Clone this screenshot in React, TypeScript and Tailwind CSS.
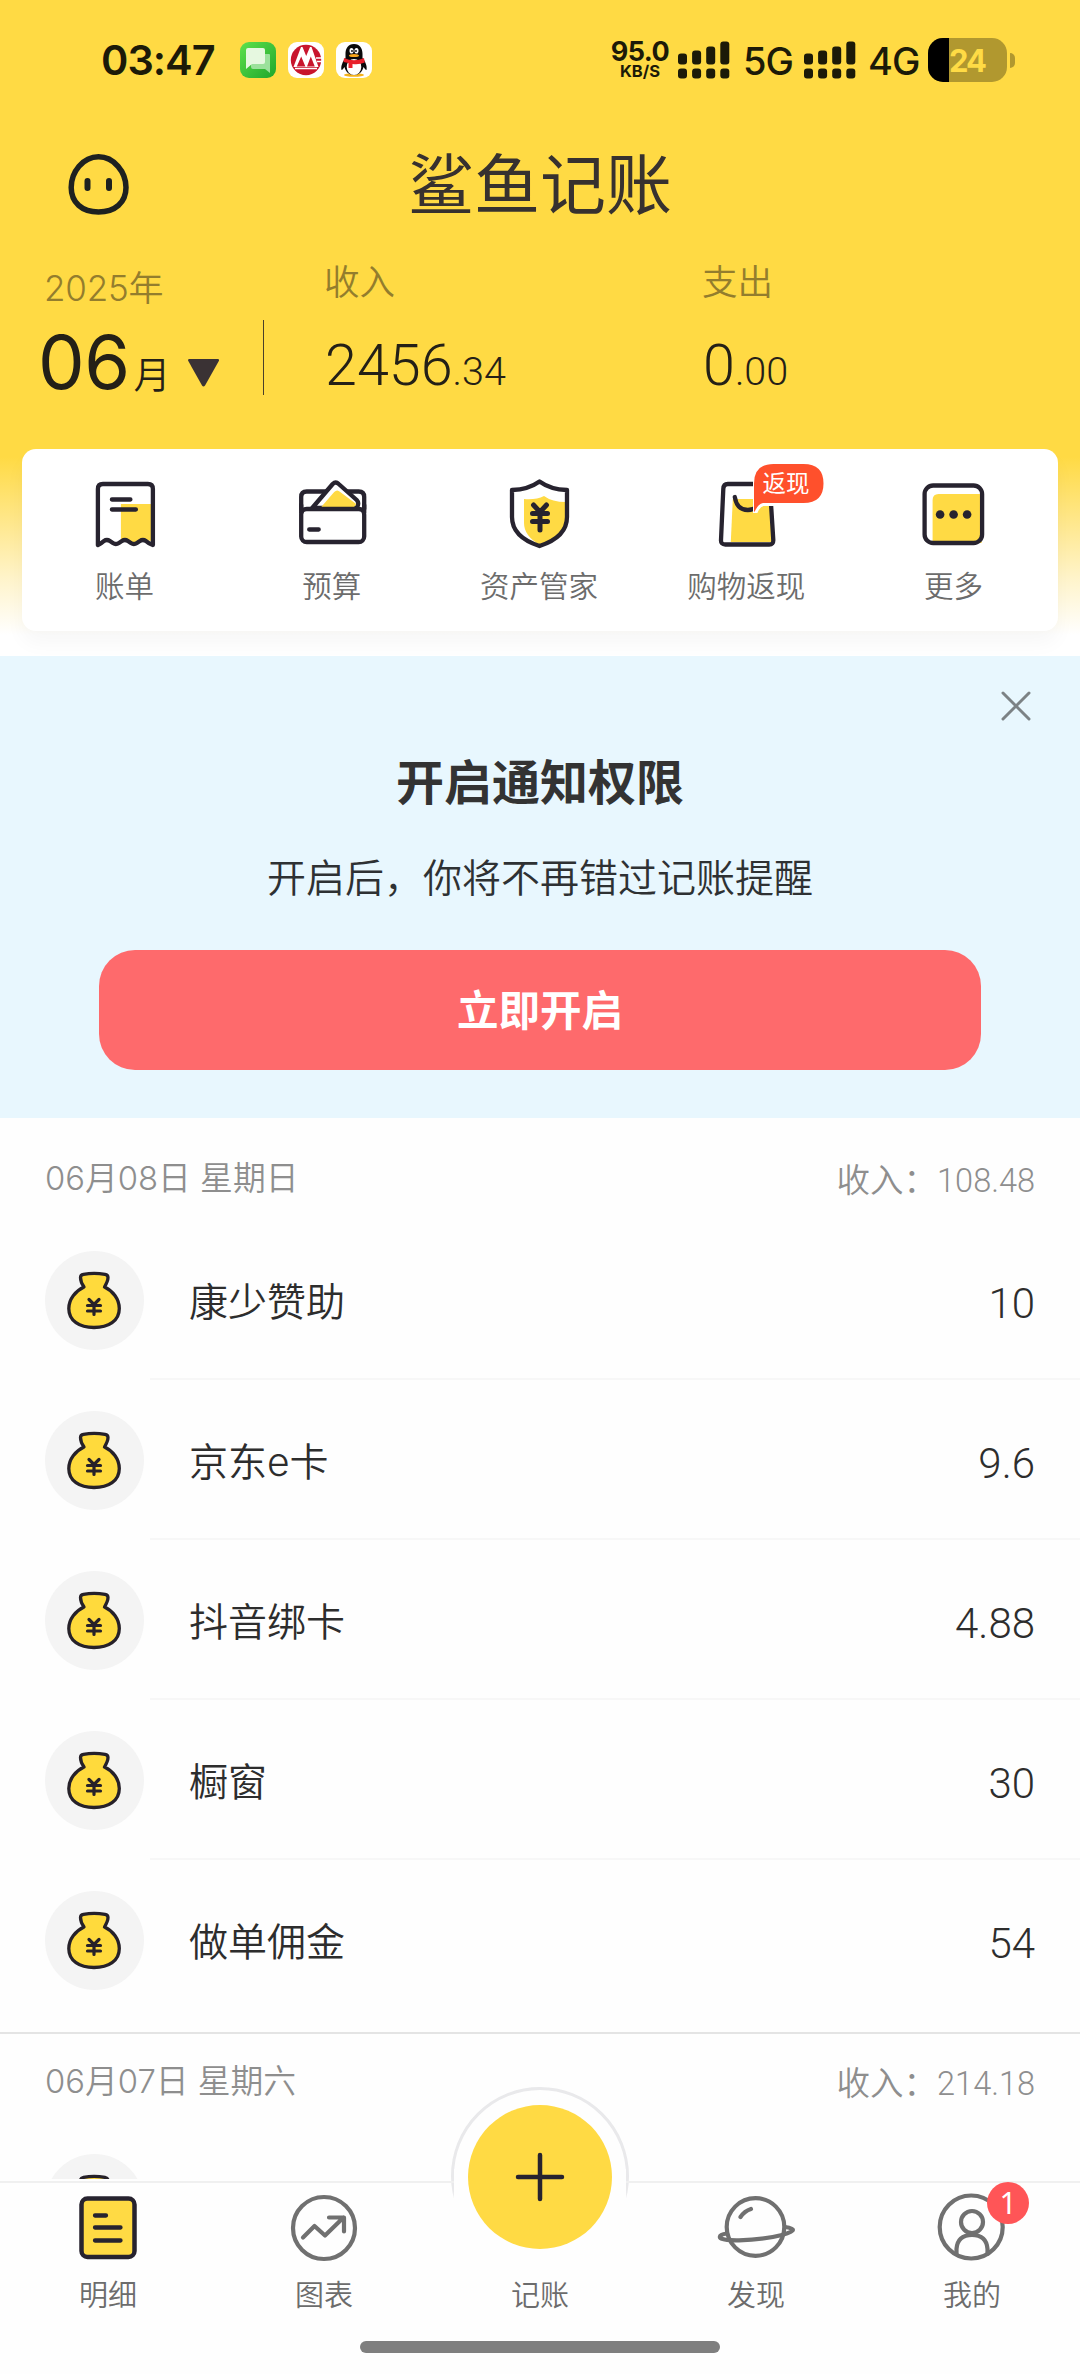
import type { ReactNode } from "react";

const CJK = "font-['Inter','Noto_Sans_CJK_SC',sans-serif]";
const NUM = "font-['Roboto','Noto_Sans_CJK_SC',sans-serif]";

function SignalBars() {
  const tops = [53, 50, 46, 41];
  return (
    <svg className="h-[38px] w-[52px]" viewBox="0 40.5 52 38" fill="#1c1a08">
      {tops.map((top, i) => (
        <g key={top}>
          <rect x={i * 14.1} y={top} width="9" height={64 - top} rx="3" />
          <rect x={i * 14.1} y="68" width="9" height="10" rx="3" />
        </g>
      ))}
    </svg>
  );
}

function StatusBar() {
  return (
    <div className="flex h-[120px] items-center pl-[101px] pr-[65px] text-[#1c1a08]">
      <span className="w-[139px] text-[41.5px] font-semibold leading-[41px] tracking-[-1px]">03:47</span>
      <div className="flex gap-3">
        <svg className="size-9" viewBox="0 0 36 36">
          <defs>
            <linearGradient id="msg" x1="0" y1="0" x2="1" y2="1">
              <stop offset="0" stopColor="#5ee14c" />
              <stop offset="1" stopColor="#1fa62b" />
            </linearGradient>
          </defs>
          <rect width="36" height="36" rx="9" fill="url(#msg)" />
          <path d="M13 12h16q1 0 1 1v18l-5-4H13q-2 0-2-2V13z" fill="#9be19b" />
          <path d="M8 6h15q2 0 2 2v12q0 2-2 2H12l-6 5V8q0-2 2-2z" fill="#e6f8e0" />
        </svg>
        <svg className="size-9" viewBox="0 0 36 36">
          <rect width="36" height="36" rx="9" fill="#fff" />
          <circle cx="18" cy="18" r="15.2" fill="#c8152d" />
          <path d="M5.500 25 13 5h1.500L18.200 14 22 5h1.500L30.500 25z" fill="#fff" />
          <path d="M8.800 24.500 13.200 14.500 17.400 24.500zM19 24.500 22.800 14.500 26.800 24.500z" fill="#c8152d" />
          <path d="M7 26.500h22M28 16h6M29 19.500h5" stroke="#fff" strokeWidth="1.600" />
        </svg>
        <svg className="size-9" viewBox="0 0 36 36">
          <rect width="36" height="36" rx="9" fill="#fff" />
          <ellipse cx="18" cy="33" rx="10" ry="1.800" fill="#f4b21b" />
          <path d="M18 2c-6 0-8.500 4.500-8.500 10v4C7 19 4.500 24 5.500 28c1 0 2-1.500 3-3 1 5 5 8 9.500 8s8.500-3 9.500-8c1 1.500 2 3 3 3 1-4-1.500-9-4-12v-4c0-5.500-2.500-10-8.500-10z" fill="#0a0a0a" />
          <ellipse cx="18" cy="25" rx="7.300" ry="8" fill="#fff" />
          <path d="M8 16q10 4.500 20 0l.8 4.500Q23 23 16.500 22v4h-4v-5L7.500 20z" fill="#e8202a" />
          <ellipse cx="15.500" cy="8.800" rx="2" ry="2.800" fill="#fff" />
          <ellipse cx="20.500" cy="8.800" rx="2" ry="2.800" fill="#fff" />
          <circle cx="16" cy="9" r="0.900" />
          <circle cx="20" cy="9" r="0.900" />
          <ellipse cx="18" cy="13.500" rx="5" ry="1.600" fill="#f9a61a" />
        </svg>
      </div>
      <div className="ml-auto flex items-center">
        <div className="flex w-[60px] flex-col items-center font-bold">
          <span className="text-[27px] leading-[22px] tracking-[-0.5px]">95.0</span>
          <span className="text-[16.5px] leading-[17px]">KB/S</span>
        </div>
        <div className="ml-2">
          <SignalBars />
        </div>
        <span className="ml-[13px] w-[61px] pt-[2px] text-[38px] font-medium leading-[38px] tracking-[-1px]">5G</span>
        <SignalBars />
        <span className="ml-[12px] w-[60px] pt-[2px] text-[38px] font-medium leading-[38px] tracking-[-1px]">4G</span>
        <div className="flex h-[44px] w-[79px] overflow-hidden rounded-[15px] bg-[#b1982f]">
          <div className="w-[21px] bg-black" />
          <span className="text-[31px] font-bold leading-[46px] tracking-[-2px] text-[#ffdb45]">24</span>
        </div>
        <div className="ml-[3px] h-[15px] w-[5px] rounded-r-full bg-[#b1982f]" />
      </div>
    </div>
  );
}

function TitleBar() {
  return (
    <div className="grid h-[130px] grid-cols-[200px_1fr_200px] items-center">
      <svg className="ml-[66px] h-[66px] w-[66px]" viewBox="66 152 66 66" fill="none" stroke="#1e2120" strokeWidth="5.500">
        <path d="M98.500 156.800C114 156.800 126 172 126 187.500C126 202.500 115 212 98.500 212S71.200 202.500 71.200 187.500C71.200 172 83 156.800 98.500 156.800Z" />
        <path d="M87.500 181v7M109 181v7" strokeWidth="6" strokeLinecap="round" />
      </svg>
      <h1 className="text-center text-[66px] font-normal leading-[70px] text-[#37312f]">鲨鱼记账</h1>
    </div>
  );
}

function Amount({ label, whole, cents, className }: { label: string; whole: string; cents: string; className: string }) {
  return (
    <div className={className}>
      <div className="-ml-px h-[66px] pt-[9px] text-[35.500px] font-[350] leading-[48px] text-[#937d2d]">{label}</div>
      <div className={`${NUM} pt-[19px] text-[57.500px] font-light leading-[62px] text-[#242017]`}>
        {whole}
        <span className="text-[39.500px]">.{cents}</span>
      </div>
    </div>
  );
}

function Summary() {
  return (
    <div className="flex h-[199px]">
      <div className="w-[263px] pl-[38px]">
        <div className="pl-[6px] pt-[14px] text-[35px] font-[350] leading-[48px] tracking-[-0.2px] text-[#937d2d]">2025年</div>
        <div className="flex items-baseline text-[#242017]">
          <span className="text-[74px] font-[370] leading-[100px] tracking-[-0.5px]">06</span>
          <span className="ml-[4px] text-[37px] font-[350]">月</span>
          <svg className="relative top-[-2px] ml-[17px] h-[28px] w-[31px]" viewBox="0 0 31 28" fill="#3a3234">
            <path d="M1 0h29q1.500.5.8 2L17 26.500q-1.500 2-3 0L.3 2Q-.5.5 1 0z" />
          </svg>
        </div>
      </div>
      <div className="mt-[70px] h-[75px] w-px bg-[#4a3f2a]" />
      <Amount className="ml-[61px] w-[378px]" label="收入" whole="2456" cents="34" />
      <Amount className="" label="支出" whole="0" cents="00" />
    </div>
  );
}

const line = { fill: "none", stroke: "#27232f", strokeWidth: 4.3, strokeLinecap: "round", strokeLinejoin: "round" } as const;

const shortcuts: { label: string; badge?: string; icon: ReactNode }[] = [
  {
    label: "账单",
    icon: (
      <svg className="size-[72px]" viewBox="90.1 479 72 72">
        <path d="M121 504h32v37l-10-1-9 5-9-5-4 1z" fill="#ffda44" />
        <g {...line}>
          <path d="M98 545V489q0-5 5-5h45q5 0 5 5v56q-5-2-7-4-3-2-6 0l-3 2q-3 2-6 0l-3-2q-3-2-6 0l-3 2q-3 2-6 0l-3-2q-3-2-6 0-2 2-6 4z" />
          <path d="M112 499.500h18.500M112 509.500h24" />
        </g>
      </svg>
    ),
  },
  {
    label: "预算",
    icon: (
      <svg className="size-[72px]" viewBox="296.800 479 72 72">
        <path d="M301 509v-12q0-5.500 5.500-5.500h52q5.500 0 5.500 5.500v12" {...line} />
        <path d="M312 508l20.500-24q3-3 6 0l18 16q3 3 0 8z" {...line} fill="#fff" />
        <path d="M321 507l13-15q3-3 6 0l16 12-2 3z" fill="#ffda44" />
        <g {...line}>
          <rect x="301" y="509" width="63" height="33" rx="5.500" />
          <path d="M301 513v-8M364 513v-8M309 529.500h9.500" />
        </g>
      </svg>
    ),
  },
  {
    label: "资产管家",
    icon: (
      <svg className="size-[72px]" viewBox="504 479 72 72">
        <path d="M524 499q12 1 20-3 8 6 22 6v17q0 17-26 26-16-9-16-22z" fill="#ffda44" />
        <g {...line}>
          <path d="M539.500 481.500q-11 8-27.500 8.500v27q0 20 27.500 29 27.500-9 27.500-29v-27q-16.500-.5-27.500-8.500z" />
          <path d="M533.500 505l6.500 7 6.500-7M540 512v18M532.500 513.500h15M532.500 521.500h15" strokeWidth="5" />
        </g>
      </svg>
    ),
  },
  {
    label: "购物返现",
    badge: "返现",
    icon: (
      <svg className="size-[72px]" viewBox="711.200 479 72 72">
        <path d="M733 499h37l3 43h-42z" fill="#ffda44" />
        <g {...line}>
          <path d="M728 484h38q4 0 4.200 4l3.300 52q.2 4.500-4 4.500h-44q-4.500 0-4.300-4.500l2.300-51q.2-5 4.500-5z" />
          <path d="M735 497q2 13 13 13t13-13" />
        </g>
      </svg>
    ),
  },
  {
    label: "更多",
    icon: (
      <svg className="size-[72px]" viewBox="918.400 479 72 72">
        <path d="M933 543v-43q0-6 6-6h43v49z" fill="#ffda44" />
        <rect x="925" y="485.500" width="57.500" height="57.500" rx="8.500" {...line} />
        <g fill="#27232f">
          <circle cx="940.500" cy="514.500" r="4.300" />
          <circle cx="954" cy="514.500" r="4.300" />
          <circle cx="967.500" cy="514.500" r="4.300" />
        </g>
      </svg>
    ),
  },
];

function ShortcutCard() {
  return (
    <div className="h-[207px] bg-[linear-gradient(to_bottom,#ffda44_0px,#ffda44_8px,#ffe789_70px,#fff4cb_130px,#ffffff_186px)] px-[22px]">
      <div className="grid h-[182px] grid-cols-5 rounded-[14px] bg-white shadow-[0_12px_20px_rgba(0,0,0,0.035)]">
        {shortcuts.map((s) => (
          <div key={s.label} className="relative flex flex-col items-center pt-[30px]">
            {s.icon}
            <span className="mt-[15px] pr-[2px] text-[29.500px] font-[350] leading-[40px] text-[#6c6c6c]">{s.label}</span>
            {s.badge && (
              <div className="absolute left-[109px] top-[14px] h-[50px] w-[72px]">
                <svg className="absolute inset-0 h-[50px] w-[72px]" viewBox="0 0 72 50">
                  <path d="M1 49V20.500Q1 1 20.500 1h30Q70.500 1 70.500 20.500T50.500 40H10q-5 1-8 8z" fill="#ff502c" stroke="#fff" strokeWidth="6" paintOrder="stroke" />
                </svg>
                <span className="relative block pl-[10px] text-[23.500px] leading-[41px] text-white">{s.badge}</span>
              </div>
            )}
          </div>
        ))}
      </div>
    </div>
  );
}

function NotificationBanner() {
  return (
    <div className="relative flex h-[462px] flex-col items-center bg-[#e8f7fe] px-[99px]">
      <svg className="absolute right-[49px] top-[35px] size-[30px]" viewBox="0 0 30 30" stroke="#7c8285" strokeWidth="3" strokeLinecap="round">
        <path d="M2 2l26 26M28 2L2 28" />
      </svg>
      <h2 className="mt-[92px] text-[48px] font-bold leading-[70px] text-[#333]">开启通知权限</h2>
      <p className="mt-[32px] text-[39px] font-[350] leading-[56px] text-[#2e3133]">开启后，你将不再错过记账提醒</p>
      <button className="mt-[44px] h-[120px] w-full rounded-[36px] bg-[#fe6a6c] pt-[2px] text-[41.500px] font-bold leading-[118px] text-white">立即开启</button>
    </div>
  );
}

function MoneyBag() {
  return (
    <svg className="size-[99px]" viewBox="0 0 99 99">
      <circle cx="49.500" cy="49.500" r="49.500" fill="#f4f4f4" />
      <path
        d="M39 36C36.500 32.500 35.500 29.500 35.500 26.500Q35.500 24 38.500 23.400Q49 21.400 60 23.400Q63 24 63 26.500C63 29.500 61.500 32.500 59.500 36C68 40 74.300 48 74.300 57.500C74.300 70 63.500 76.500 49 76.500S23.800 70 23.800 57.500C23.800 48 30.500 40 39 36Z"
        fill="#ffda3c"
        stroke="#262129"
        strokeWidth="3.300"
        strokeLinejoin="round"
      />
      <path d="M44 48.500l5 5 5-5M42.500 54.500h13M42.500 60h13M49 54v9.500" fill="none" stroke="#262129" strokeWidth="3.200" strokeLinecap="round" />
    </svg>
  );
}

interface Entry {
  name: string;
  amount: string;
}

function DaySection({ date, total, entries }: { date: string; total: string; entries: Entry[] }) {
  return (
    <section className="border-b-2 border-[#e4e4e4] pb-[12px]">
      <div className="flex h-[89px] items-center justify-between px-[45px] pt-[6px] font-[350] text-[#8e8e8e]">
        <span className="pt-px text-[32.800px]">{date}</span>
        <span className={`${NUM} pt-[6px] text-[33.500px]`}>
          收入：<span className="text-[32.500px] font-light">{total}</span>
        </span>
      </div>
      {entries.map((e, i) => (
        <div key={e.name} className="flex h-[160px] pl-[45px]">
          <div className="flex w-[105px] items-center">
            <MoneyBag />
          </div>
          <div className={`flex flex-1 items-center justify-between pl-[39px] pr-[45px] text-[#2d2d2d] ${i < entries.length - 1 ? "border-b-2 border-[#f7f7f7]" : "pb-[2px]"}`}>
            <span className="pt-[6px] text-[39px] font-[350]">{e.name}</span>
            <span className={`${NUM} pt-[9px] text-[42px] font-light`}>{e.amount}</span>
          </div>
        </div>
      ))}
    </section>
  );
}

const grey = { fill: "none", stroke: "#707070", strokeWidth: 4.2, strokeLinecap: "round", strokeLinejoin: "round" } as const;

const tabs: { label: string; icon: ReactNode; badge?: string }[] = [
  {
    label: "明细",
    icon: (
      <svg className="h-[70px] w-[80px]" viewBox="68 2192 80 70">
        <rect x="81.500" y="2198.500" width="53" height="58.500" rx="6" fill="#ffda44" stroke="#27232f" strokeWidth="4.500" />
        <path d="M95 2215.500h11M95 2227.500h25.500M95 2240.500h25.500" {...line} />
      </svg>
    ),
  },
  {
    label: "图表",
    icon: (
      <svg className="h-[70px] w-[80px]" viewBox="284 2192 80 70">
        <g {...grey}>
          <circle cx="324" cy="2228" r="31" />
          <path d="M303 2237.500L314.500 2226L325 2235.500L343.500 2217.500M329 2217.500h15v14" />
        </g>
      </svg>
    ),
  },
  { label: "记账", icon: <div className="h-[70px]" /> },
  {
    label: "发现",
    icon: (
      <svg className="h-[70px] w-[80px]" viewBox="716 2192 80 70">
        <g {...grey}>
          <circle cx="755.500" cy="2227" r="28.800" />
          <path d="M740.500 2217q4-6 10.500-8M727 2233.500q-8 1-7 4 2 3 19 2.800Q762 2240 782 2235q11-3 11-5t-8-3" />
        </g>
      </svg>
    ),
  },
  {
    label: "我的",
    badge: "1",
    icon: (
      <svg className="h-[70px] w-[80px]" viewBox="932 2192 80 70">
        <g {...grey}>
          <circle cx="971.200" cy="2227" r="31.500" />
          <circle cx="972" cy="2222" r="11" />
          <path d="M956.500 2254v-5q1-14 15.500-14t15.500 14v5" />
        </g>
      </svg>
    ),
  },
];

function TabBar() {
  return (
    <nav className="relative h-[195px] bg-[#fefefe]">
      <div className="absolute left-[451px] top-[-92px] size-[178px] rounded-full border-[3px] border-[#e9e9eb] bg-[#fefefe]" />
      <div className="absolute inset-x-0 top-[2px] h-[2px] bg-[#f0f0f0]" />
      <div className="absolute left-[454px] top-[-10px] h-[40px] w-[172px] bg-[#fefefe]" />
      <div className="absolute left-[440px] top-[12px] h-[90px] w-[200px] bg-[linear-gradient(to_bottom,transparent,#fefefe_18px)]" />
      <button className="absolute left-[468px] top-[-74px] flex size-[144px] items-center justify-center rounded-full bg-[#ffda44]">
        <svg className="size-[50px]" viewBox="0 0 50 50" stroke="#27232f" strokeWidth="4.500" strokeLinecap="round">
          <path d="M25 3v44M3 25h44" />
        </svg>
      </button>
      <div className="relative grid grid-cols-5 pt-[13px]">
        {tabs.map((t) => (
          <div key={t.label} className="relative flex flex-col items-center">
            {t.icon}
            <span className="mt-[14px] text-[29px] font-[350] leading-[40px] text-[#6c6c6c]">{t.label}</span>
            {t.badge && (
              <span className="absolute left-[123px] top-[-10px] size-[42px] rounded-full bg-[#ff5557] text-center font-['Noto_Sans',sans-serif] text-[30px] leading-[42px] text-white">{t.badge}</span>
            )}
          </div>
        ))}
      </div>
      <div className="mx-auto mt-[25px] h-[12px] w-[360px] rounded-full bg-[#7f7f7f]" />
    </nav>
  );
}

export default function App() {
  return (
    <div lang="zh-CN" className={`${CJK} flex h-[2374px] w-[1080px] flex-col overflow-hidden bg-[#fefefe]`}>
      <header className="h-[449px] shrink-0 bg-[#ffda44]">
        <StatusBar />
        <TitleBar />
        <Summary />
      </header>
      <main className="min-h-0 flex-1 overflow-hidden">
        <ShortcutCard />
        <NotificationBanner />
        <div className="pt-[13px]">
          <DaySection
            date="06月08日 星期日"
            total="108.48"
            entries={[
              { name: "康少赞助", amount: "10" },
              { name: "京东e卡", amount: "9.6" },
              { name: "抖音绑卡", amount: "4.88" },
              { name: "橱窗", amount: "30" },
              { name: "做单佣金", amount: "54" },
            ]}
          />
          <DaySection date="06月07日 星期六" total="214.18" entries={[{ name: "", amount: "" }]} />
        </div>
      </main>
      <TabBar />
    </div>
  );
}
